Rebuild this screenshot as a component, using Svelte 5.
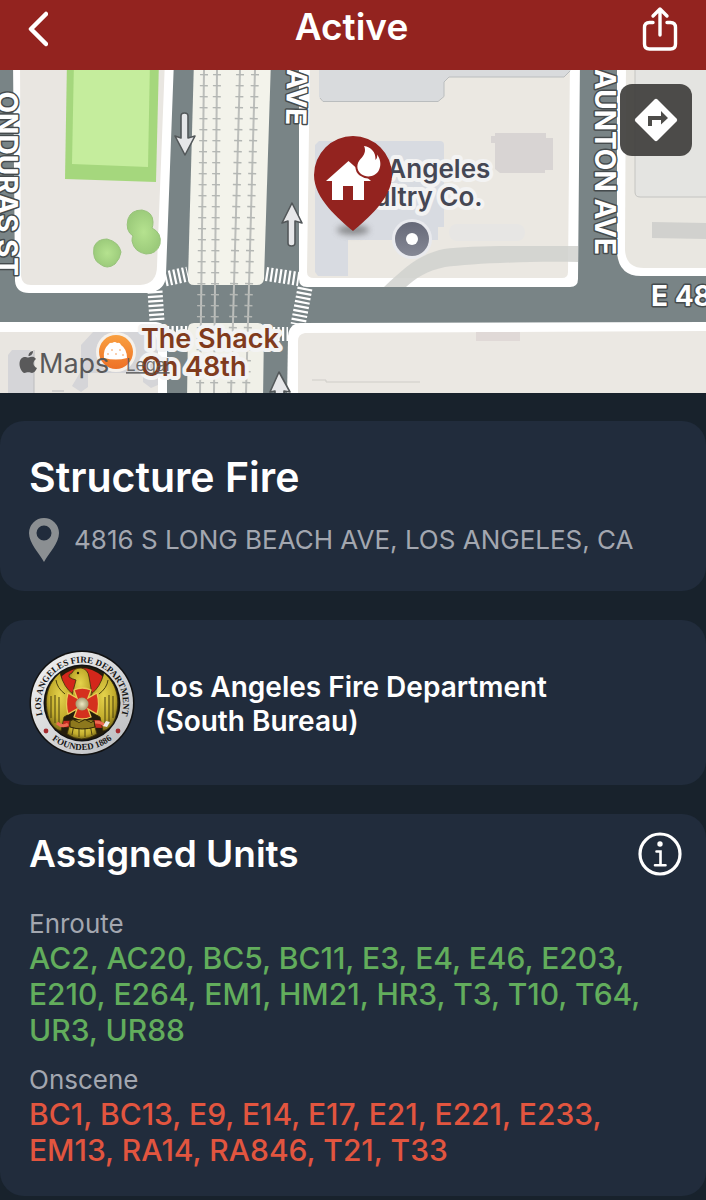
<!--
  Incident detail screen

  Map header, incident summary, agency and the units assigned to the call.
-->
<script lang="ts">
	interface UnitGroup {
		label: string;
		status: 'enroute' | 'onscene';
		units: string[];
	}

	const incident = {
		type: 'Structure Fire',
		address: '4816 S LONG BEACH AVE, LOS ANGELES, CA',
		agency: 'Los Angeles Fire Department',
		bureau: '(South Bureau)'
	};

	const groups: UnitGroup[] = [
		{
			label: 'Enroute',
			status: 'enroute',
			units: [
				'AC2', 'AC20', 'BC5', 'BC11', 'E3', 'E4', 'E46', 'E203', 'E210',
				'E264', 'EM1', 'HM21', 'HR3', 'T3', 'T10', 'T64', 'UR3', 'UR88'
			]
		},
		{
			label: 'Onscene',
			status: 'onscene',
			units: [
				'BC1', 'BC13', 'E9', 'E14', 'E17', 'E21', 'E221', 'E233',
				'EM13', 'RA14', 'RA846', 'T21', 'T33'
			]
		}
	];

	// top and bottom x of each rail
	const rails = [
		[204, 200],
		[217, 214],
		[240, 231],
		[255, 246]
	];
</script>

<header class="nav">
	<button class="nav-button" aria-label="Back">
		<svg width="24" height="40" viewBox="0 0 24 40">
			<path d="M22 5 7 20l15 15" fill="none" stroke="#fff" stroke-width="4.500" stroke-linecap="round" stroke-linejoin="round" />
		</svg>
	</button>
	<h1>Active</h1>
	<button class="nav-button end" aria-label="Share">
		<svg width="38" height="46" viewBox="0 0 38 46">
			<g fill="none" stroke="#fff" stroke-width="3.400" stroke-linecap="round" stroke-linejoin="round">
				<path d="M12 16.500H8.500Q3.500 16.500 3.500 21.500V38Q3.500 43 8.500 43H29.500Q34.500 43 34.500 38V21.500Q34.500 16.500 29.500 16.500H26" />
				<path d="M19 29V3.500M12 10l7-7 7 7" />
			</g>
		</svg>
	</button>
</header>

<section class="map" aria-label="Incident map">
	<svg class="map-canvas" viewBox="0 70 706 323">
		<defs>
			<linearGradient id="poi" x1="0" y1="0" x2="0" y2="1">
				<stop offset="0" stop-color="#666978" />
				<stop offset="1" stop-color="#858895" />
			</linearGradient>
			<linearGradient id="food" x1="0" y1="0" x2="0" y2="1">
				<stop offset="0" stop-color="#f9a040" />
				<stop offset="1" stop-color="#ee7126" />
			</linearGradient>
			<radialGradient id="tree">
				<stop offset="0" stop-color="#b5e28f" />
				<stop offset="1" stop-color="#9ccb7b" />
			</radialGradient>
			<filter id="soft" x="-30%" y="-80%" width="160%" height="260%">
				<feGaussianBlur stdDeviation="3" />
			</filter>
		</defs>

		<rect y="70" width="706" height="323" fill="#798486" />

		<!-- city blocks: white kerb, then land -->
		<path d="M13 60 15 281Q16 293 29 293H148Q166 291 166 274L174 60Z" fill="#fff" />
		<path d="M20 60 21 276Q22 285 31 285H140Q157 284 157 266L165 60Z" fill="#e9e6e1" />
		<path d="M299 60V279Q299 287 307 287H570Q578 287 578 279L580 60Z" fill="#fff" />
		<path d="M310 60 307 272Q307 278 314 278H562Q568 278 568 272L570 60Z" fill="#ebe8e2" />
		<path d="M617 60V253Q619 276 641 276H710V60Z" fill="#fff" />
		<path d="M626 60 625 250Q626 268 644 268H710V60Z" fill="#e9e7e1" />
		<path d="M0 322H156Q167 323 167 335V400H0Z" fill="#fff" />
		<path d="M0 332H148Q158 333 158 343V400H0Z" fill="#e9e6e1" />
		<path d="M710 322 300 323Q289 324 288 336L287 400H710Z" fill="#fff" />
		<path d="M710 331 305 333Q298 334 298 341V400H710Z" fill="#ebe8e3" />

		<!-- park -->
		<path d="M67 60 65 179 156 182 159 60Z" fill="#a5d77d" />
		<path d="M74 60 72 164 148 167 150 60Z" fill="#c5ed9d" />
		<g fill="url(#tree)" stroke="#98c37b" stroke-width="1">
			<path d="M128 219q3-9 14-9 11 2 11 12 0 4-1 6 10 5 8 16-3 10-14 10-12-2-14-13 0-4 1-5-8-5-5-17Z" />
			<path d="M94 247q3-8 13-8 12 3 14 13-1 7-6 12-8 6-15 0-8-4-6-17Z" />
		</g>

		<!-- buildings -->
		<path d="M319 60V97l4 4H438l6-5V82l5-5H564l7-7V60Z" fill="#d9dbdd" />
		<path d="M320 98l3 3.500H438l6-5V82l5-5H564l6-6" fill="none" stroke="#babdbe" stroke-width="1" />
		<path d="M319 141H440q4 0 4 4V227H438V240H348V276H318L315 272V145Z" fill="#d8dbe1" />
		<path d="M495 133H546V138H553V170H545V173H500L495 169V143H491V136H495Z" fill="#d8d4d3" />
		<rect x="449" y="224" width="76" height="17" rx="8" fill="#e7e6e4" />
		<path d="M635 60V192q0 5 5 5H710V60Z" fill="#e4e4e1" stroke="#c4c4c1" />
		<path d="M652 222 710 223V239L652 238Z" fill="#d1d1ce" />
		<path d="M384 287C405 267 420 254 444 249 470 245 530 246 578 246V262C520 261 470 264 445 267 426 271 416 278 406 287Z" fill="#d0d1ce" opacity=".85" />
		<rect x="476" y="332" width="44" height="9" fill="#e0d9d7" />
		<path d="M312 380h14v2h94" fill="none" stroke="#cfcdc8" />
		<path d="M8 393V355l4-5H30l4 5V393ZM81 371V345l12-13h56l9 9V385l-7 3-8-6v-9h-55v14l-7 5-9-6Z" fill="#d5d5d8" />
		<path d="M34 350v43M52 391h12" fill="none" stroke="#bcbcbf" />

		<!-- rail corridor -->
		<path d="M194 60 188 279Q188 285 194 285H257Q263 285 264 279L271 60Z" fill="#f3f3eb" />
		<path d="M188 329Q188 323 194 323H258Q264 323 264 329L263 400H187Z" fill="#f0f0e8" />
		{#each rails as [top, bottom]}
			<line x1={top} y1="70" x2={bottom} y2="393" stroke="#bcbebb" stroke-width="2" />
			<line x1={top} y1="74" x2={bottom} y2="393" stroke="#b4b7b4" stroke-width="8" stroke-dasharray="1.400 9.600" />
		{/each}

		<!-- crosswalks -->
		<g fill="none" stroke="#fff">
			<path d="M165 279 188 274" stroke-width="15" stroke-dasharray="2.200 2.300" />
			<path d="M266 274 299 279" stroke-width="14" stroke-dasharray="2.200 2.300" />
			<path d="M155 291 157 321" stroke-width="15" stroke-dasharray="2.200 2.300" />
			<path d="M305 288 298 325" stroke-width="15" stroke-dasharray="2.200 2.300" />
			<path d="M264 334H288" stroke-width="14" stroke-dasharray="2.200 2.300" />
			<path d="M167 333H188" stroke-width="14" stroke-dasharray="2.200 2.300" />
		</g>

		<!-- one-way arrows -->
		<g fill="#e6e7e9" stroke="#53585a" stroke-width="1.600" stroke-linejoin="round">
			<path d="M181 116q0-3 3.500-3t3.500 3v22l7-2-10 19-10-19 6 2Z" />
			<path d="M288 243q0 3 3.500 3t3.500-3v-22l7 2-10-20-10 20 6-2Z" />
			<path d="M275 410v-19l-5 1 9-20 11 20-6-1v19Z" />
		</g>

		<g class="street">
			<text transform="translate(-3 276) rotate(90)" text-anchor="end">ONDURAS ST</text>
			<text transform="translate(286 125) rotate(91)" text-anchor="end">AVE</text>
			<text transform="translate(595 255) rotate(90)" text-anchor="end">AUNTON AVE</text>
			<text x="651" y="306">E 48TH</text>
		</g>

		<g class="place">
			<text x="336" y="178">Los Angeles</text>
			<text x="342" y="206">Poultry Co.</text>
		</g>
		<circle cx="412" cy="239" r="20" fill="#e9eaee" />
		<circle cx="412" cy="239" r="17" fill="url(#poi)" />
		<circle cx="412" cy="239" r="6" fill="#fff" />

		<circle cx="116" cy="352" r="20" fill="#f5f1eb" />
		<circle cx="116" cy="352" r="17" fill="url(#food)" />
		<path d="M104 358q-1-9 4-13 2-3 4-2 3-2 5 0 3-1 4 2 6 4 6 13-11 3-23 0Z" fill="#fff" />
		<g fill="#f39549">
			<circle cx="108" cy="354" r=".8" />
			<circle cx="112" cy="350" r=".8" />
			<circle cx="116" cy="354" r=".8" />
			<circle cx="120" cy="350" r=".8" />
			<circle cx="123" cy="355" r=".8" />
		</g>
		<g class="place food">
			<text x="141" y="348">The Shack</text>
			<text x="141" y="376">On 48th</text>
		</g>

		<!-- map attribution -->
		<g fill="#59595a">
			<path d="M28.500 357.500C31 356.500 34 356 36 359 32.500 361.500 32.500 366 37 368 36 370.500 34 373 32 373 30.500 373 30 372.300 28.300 372.300 26.500 372.300 26 373 24.500 373 22 372.500 19.500 368 19.500 364 19.500 359.500 22 357 25 357 26.500 357 27.500 357.800 28.500 357.500Z" />
			<path d="M28.500 356C28.300 353.500 30.300 351.200 33 351 33.200 353.700 31 356 28.500 356Z" />
		</g>
		<text class="maps" x="39" y="373">Maps</text>
		<a href="#legal"><text class="legal" x="126" y="371">Legal</text></a>

		<!-- incident pin -->
		<ellipse cx="353" cy="230" rx="16" ry="5" fill="#555" opacity=".6" filter="url(#soft)" />
		<path d="M353 231C339 219 314 199 314 175A39 39 0 0 1 392 175C392 199 367 219 353 231Z" fill="#93231f" />
		<path d="M326 181 348.500 161 371 181H364V200H353V186H343V200H332V181Z" fill="#fff" />
		<path d="M364 146C371 147 376 152 375.500 160 377 158.500 377.500 156.500 377 154.500 380.500 159 381.500 165 379 170 376 176.500 367 178.500 361 174 356 170 356.500 163 360.500 159 364 155.500 366.500 151 364 146Z" fill="#fff" stroke="#93231f" stroke-width="4" paint-order="stroke" />
	</svg>

	<button class="directions" aria-label="Directions">
		<svg width="44" height="44" viewBox="0 0 44 44">
			<path d="M20.500 1.500q1.500-1.500 3 0l19 19q1.500 1.500 0 3l-19 19q-1.500 1.500-3 0l-19-19q-1.500-1.500 0-3Z" fill="#fff" />
			<path d="M14 28V18h13V13l7 7-7 6.500V22h-9v6Z" fill="#4d4c49" />
		</svg>
	</button>
</section>

<main>
	<section class="card summary">
		<h2>{incident.type}</h2>
		<p class="address">
			<svg width="30" height="46" viewBox="0 0 30 46">
				<path fill-rule="evenodd" d="M15 45C10 36 0 26 0 16a15 15 0 0 1 30 0c0 10-10 20-15 29Zm0-36.500a7.500 7.500 0 1 0 0 15 7.500 7.500 0 0 0 0-15Z" fill="#8b8f92" />
			</svg>
			<span>{incident.address}</span>
		</p>
	</section>

	<section class="card agency">
		<svg width="106" height="106" viewBox="0 0 106 106" role="img" aria-label="Department seal">
			<defs>
				<radialGradient id="gold" cx=".5" cy=".4" r=".65">
					<stop offset="0" stop-color="#e5d34c" />
					<stop offset=".6" stop-color="#c2ac2c" />
					<stop offset="1" stop-color="#6b5c14" />
				</radialGradient>
				<linearGradient id="ring" x1="0" y1="0" x2="1" y2="1">
					<stop offset="0" stop-color="#f4f4f4" />
					<stop offset="1" stop-color="#b9bbbe" />
				</linearGradient>
				<radialGradient id="boss">
					<stop offset="0" stop-color="#efe8c4" />
					<stop offset="1" stop-color="#a49b70" />
				</radialGradient>
				<path id="arc-top" d="M20 78A41 41 0 1 1 86 78" />
				<path id="arc-bottom" d="M12 77A48 48 0 0 0 94 77" />
			</defs>
			<circle cx="53" cy="53" r="52.500" fill="#111" />
			<circle cx="53" cy="53" r="51" fill="url(#ring)" />
			<circle cx="53" cy="53" r="38.500" fill="#111" />
			<circle cx="53" cy="53" r="37" fill="#251d0c" />
			<path d="M33 26Q53 10 73 26L71 55H35Z" fill="#d3271b" />
			<path d="M27 71 80 70 78 78 27 77Z" fill="#c52b20" />
			<g fill="url(#gold)" stroke="#3b310a" stroke-width=".8">
				<path d="M31 23C18 34 14 50 20 69q4 10 12 12l3-14 10-6-1-17Q35 38 31 23Z" />
				<path d="M75 23C88 34 92 50 86 69q-4 10-12 12l-3-14-10-6 1-17Q71 38 75 23Z" />
				<path d="M40 27q-1-3 3-4 2-5 9-5 7 1 8 9l3 17-5 12H47l-4-11 4-15q-4-1-7-3Z" />
				<path d="M42 70 38 84q14 10 30 0l-4-14Z" />
			</g>
			<circle cx="49" cy="23" r="1.200" fill="#2b2208" />
			<path d="M22 46v22M26 45v28M30 47v29M84 46v22M80 45v28M76 47v29M45 74l-2 11M50 74v13M56 74v13M61 74l2 11M27 30q1 8 9 14M79 30q-1 8-9 14" fill="none" stroke="#4b400e" stroke-width="1" />
			<path d="M45 40q8-4 17 0l-3 8 9-5q3 11 0 21l-9-5 3 8q-9 4-17 0l3-8-9 5q-3-10 0-21l9 5Z" fill="#d4301e" stroke="#e9ca55" stroke-width="1.300" />
			<circle cx="53" cy="54" r="6.500" fill="url(#boss)" />
			<path d="M28 73q6 5 11 1M66 72q7 0 10 4" fill="none" stroke="#ee6b52" stroke-width="3" />
			<path d="M77 71l4 1-3 5-4-1Z" fill="#eee" />
			<path d="M41 71q3-3 6 0t6 0 6 0 6 0l1 6q-13 4-25 0Z" fill="#8d781d" stroke="#302606" />
			<g fill="#a62c30">
				<circle cx="17" cy="81" r="2.400" />
				<circle cx="89" cy="81" r="2.400" />
			</g>
			<g class="seal-text">
				<text><textPath href="#arc-top" startOffset="50%">LOS ANGELES FIRE DEPARTMENT</textPath></text>
				<text><textPath href="#arc-bottom" startOffset="50%">FOUNDED 1886</textPath></text>
			</g>
		</svg>
		<h3>{incident.agency}<br />{incident.bureau}</h3>
	</section>

	<section class="card units">
		<div class="units-header">
			<h2>Assigned Units</h2>
			<button aria-label="Unit information">
				<svg width="44" height="44" viewBox="0 0 44 44">
					<circle cx="22" cy="22" r="20" fill="none" stroke="#fff" stroke-width="3.200" />
					<circle cx="22" cy="12" r="2.700" fill="#fff" />
					<path d="M18.500 19.500h4V33M17 33.300h10.500" fill="none" stroke="#fff" stroke-width="2.600" stroke-linecap="round" />
				</svg>
			</button>
		</div>
		{#each groups as group}
			<div class="unit-group">
				<h4>{group.label}</h4>
				<p class={group.status}>{group.units.join(', ')}</p>
			</div>
		{/each}
	</section>
</main>

<style>
	:global(body) {
		margin: 0;
		background: #18222c;
		font-family: Inter, 'Liberation Sans', sans-serif;
		color: #fff;
	}

	h1,
	h2,
	h3,
	h4,
	p {
		margin: 0;
	}

	button {
		padding: 0;
		border: 0;
		background: none;
		cursor: pointer;
	}

	svg {
		display: block;
		flex-shrink: 0;
	}

	.nav {
		display: grid;
		grid-template-columns: 1fr auto 1fr;
		align-items: center;
		box-sizing: border-box;
		height: 70px;
		padding: 0 27px 12px 24px;
		background: #93231f;
	}

	.nav h1 {
		font-size: 37px;
		line-height: 40px;
		font-weight: 600;
		padding-bottom: 4px;
	}

	.nav-button {
		justify-self: start;
	}

	.nav-button.end {
		justify-self: end;
	}

	.map {
		position: relative;
	}

	.map-canvas {
		width: 100%;
		height: auto;
	}

	.street {
		font-size: 28px;
		font-weight: 700;
		fill: #fff;
		stroke: #454b4d;
		stroke-width: 3px;
		stroke-linejoin: round;
		paint-order: stroke;
	}

	.place {
		font-size: 26px;
		font-weight: 600;
		fill: #454754;
		stroke: #f3f3f3;
		stroke-width: 8px;
		stroke-linejoin: round;
		paint-order: stroke;
	}

	.place.food {
		font-size: 27px;
		fill: #803b1d;
	}

	.maps {
		font-size: 27px;
		fill: #59595a;
	}

	.legal {
		font-size: 17px;
		fill: #59595a;
		fill-opacity: 0.85;
		text-decoration: underline;
	}

	.directions {
		position: absolute;
		top: 14px;
		right: 14px;
		display: grid;
		place-items: center;
		width: 72px;
		height: 72px;
		border-radius: 12px;
		background: rgba(65, 64, 61, 0.93);
	}

	main {
		display: flex;
		flex-direction: column;
		gap: 29px;
		padding: 28px 0 2px;
	}

	.card {
		box-sizing: border-box;
		padding: 28px 24px 28px 29px;
		border-radius: 24px;
		background: #212c3c;
	}

	.card h2 {
		font-weight: 600;
	}

	.summary h2 {
		font-size: 41px;
		line-height: 56px;
	}

	.address {
		display: flex;
		align-items: center;
		gap: 15px;
		margin-top: 12px;
		font-size: 26px;
		line-height: 32px;
		color: #a3a7b0;
	}

	.agency {
		display: flex;
		align-items: center;
		gap: 20px;
		min-height: 165px;
	}

	.agency h3 {
		padding-top: 2px;
		font-size: 28px;
		line-height: 34px;
		font-weight: 600;
	}

	.seal-text {
		font-family: 'Liberation Serif', serif;
		font-size: 9px;
		font-weight: 700;
		text-anchor: middle;
		fill: #151515;
	}

	.units {
		padding-top: 18px;
	}

	.units-header {
		display: flex;
		align-items: center;
		justify-content: space-between;
	}

	.units-header h2 {
		font-size: 37px;
		line-height: 44px;
	}

	.unit-group {
		margin-top: 16px;
	}

	.units-header + .unit-group {
		margin-top: 32px;
	}

	.unit-group h4 {
		font-size: 26px;
		line-height: 32px;
		font-weight: 400;
		color: #a3a7b0;
	}

	.unit-group p {
		font-size: 30px;
		line-height: 36px;
		font-weight: 500;
	}

	.enroute {
		color: #62ad5c;
	}

	.onscene {
		color: #e2553f;
	}
</style>
